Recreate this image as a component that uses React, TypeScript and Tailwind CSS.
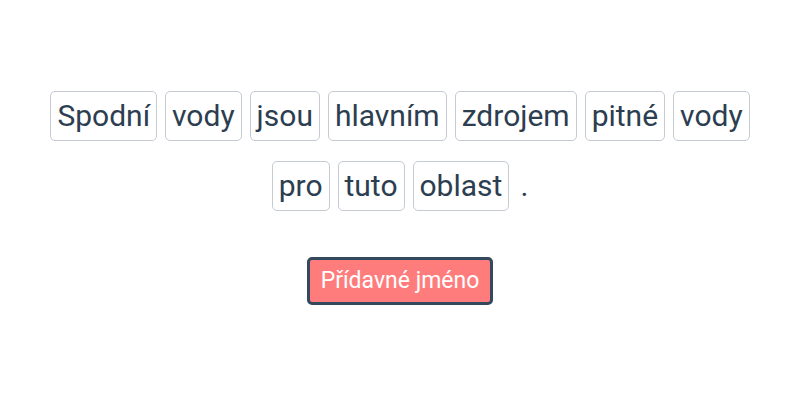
import React from 'react';

const rows: string[][] = [
  ['Spodní', 'vody', 'jsou', 'hlavním', 'zdrojem', 'pitné', 'vody'],
  ['pro', 'tuto', 'oblast'],
];

const Word: React.FC<{ text: string }> = ({ text }) => (
  <span className="inline-flex h-[50px] items-center rounded-[5px] border border-[#c5cad3] px-[6px] text-[30px] leading-none text-[#2c3e50]">
    {text}
  </span>
);

export default function App() {
  return (
    <div className="flex h-[400px] w-[800px] flex-col items-center bg-white pt-[91px] font-['Roboto',sans-serif]">
      <div className="flex flex-col items-center gap-[20px]">
        {rows.map((row, i) => (
          <div key={i} className="flex items-center gap-[8px]">
            {row.map((w, j) => (
              <Word key={j} text={w} />
            ))}
            {i === rows.length - 1 && (
              <span className="ml-[3px] text-[30px] leading-none text-[#2c3e50]">.</span>
            )}
          </div>
        ))}
      </div>
      <button className="mt-[46px] h-[48px] rounded-[5px] border-[3px] border-[#34495e] bg-[#ff7c7c] px-[11px] text-[23px] text-white">
        Přídavné jméno
      </button>
    </div>
  );
}
